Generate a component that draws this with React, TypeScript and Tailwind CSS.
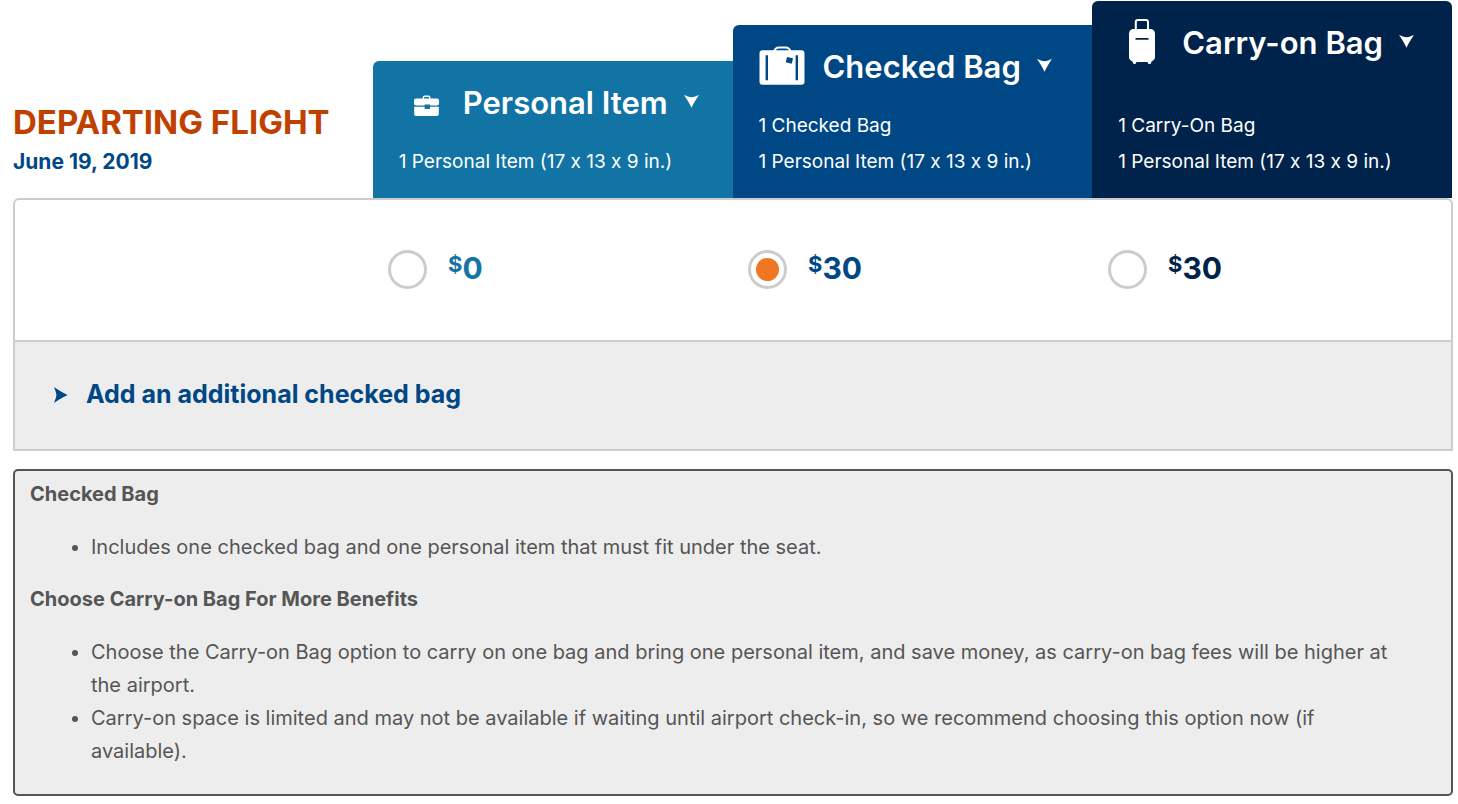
import { useState } from "react";
import type { ReactNode } from "react";

function BriefcaseIcon() {
  return (
    <svg viewBox="0 0 48 48" className="size-12 shrink-0" fill="currentColor" aria-hidden="true">
      <path d="M24.3 20v-1.200a1.500 1.500 0 0 1 1.500-1.500h3.600a1.500 1.500 0 0 1 1.500 1.500V20" fill="none" stroke="currentColor" strokeWidth="1.4" />
      <path d="M17 19.400h21a2 2 0 0 1 2 2v3a2 2 0 0 1-2 2h-7v-.8h-5.400v.8H17a2 2 0 0 1-2-2v-3a2 2 0 0 1 2-2z" />
      <path d="M15.200 27.800h10.400V30H31v-2.200h8.800V35a2 2 0 0 1-2 2H17.200a2 2 0 0 1-2-2z" />
    </svg>
  );
}

function SuitcaseIcon() {
  return (
    <svg viewBox="0 0 48 48" className="size-12 shrink-0" fill="currentColor" aria-hidden="true">
      <path d="M15.200 8.200c.8-2.600 2.400-3.800 4.600-3.800h7c2.200 0 3.800 1.200 4.600 3.800" fill="none" stroke="currentColor" strokeWidth="2" />
      <path
        fillRule="evenodd"
        d="M3.500 7.300h39a3 3 0 0 1 3 3v28.400a3 3 0 0 1-3 3h-39a3 3 0 0 1-3-3V10.300a3 3 0 0 1 3-3zM6.600 12.300v25h2.400v-25zM36.600 12.300v25h2.400v-25zM28 14l6 1.300-1.300 5.400-6-1.400z"
      />
    </svg>
  );
}

function RollerBagIcon() {
  return (
    <svg viewBox="0 0 48 48" className="size-12 shrink-0" fill="currentColor" aria-hidden="true">
      <path d="M17.800 11V3a2 2 0 0 1 2-2h8.200a2 2 0 0 1 2 2v8" fill="none" stroke="currentColor" strokeWidth="2" />
      <path
        fillRule="evenodd"
        d="M15.500 10h17a4.500 4.500 0 0 1 4.500 4.500V38c0 2-1.200 3.400-3.200 4.200L32.500 45h-2l-1-2h-11l-1 2h-2l-1.300-2.800C12.200 41.400 11 40 11 38V14.500a4.500 4.500 0 0 1 4.500-4.500zM17.500 19v1.800h13V19z"
      />
    </svg>
  );
}

function Arrow({ className }: { className: string }) {
  return (
    <svg viewBox="0 0 15 15" className={className} fill="currentColor" aria-hidden="true">
      <path d="M0 0C3 1 5 2.200 7.500 2.200S12 1 15 0C12.500 3.500 10 7.500 7.500 12.800C5 7.500 2.500 3.500 0 0z" />
    </svg>
  );
}

type Option = {
  id: string;
  title: string;
  items: string[];
  price: number;
  icon: ReactNode;
  tab: string;
  list: string;
  priceColor: string;
};

const options: Option[] = [
  {
    id: "personal",
    title: "Personal Item",
    items: ["1 Personal Item (17 x 13 x 9 in.)"],
    price: 0,
    icon: <BriefcaseIcon />,
    tab: "rounded-tl-md bg-[#1273a5]",
    list: "",
    priceColor: "text-[#1273a5]",
  },
  {
    id: "checked",
    title: "Checked Bag",
    items: ["1 Checked Bag", "1 Personal Item (17 x 13 x 9 in.)"],
    price: 30,
    icon: <SuitcaseIcon />,
    tab: "rounded-tl-md bg-[#004785]",
    list: "",
    priceColor: "text-[#004785]",
  },
  {
    id: "carry-on",
    title: "Carry-on Bag",
    items: ["1 Carry-On Bag", "1 Personal Item (17 x 13 x 9 in.)"],
    price: 30,
    icon: <RollerBagIcon />,
    tab: "rounded-t-md bg-[#00234b]",
    list: "mt-6",
    priceColor: "text-[#00234b]",
  },
];

export default function App() {
  const [selected, setSelected] = useState("checked");

  return (
    <main className="bg-white pt-px pr-[5px] pb-2 pl-[13px] font-['Inter','Liberation_Sans',sans-serif] [font-variant-ligatures:no-contextual]">
      <header className="grid grid-cols-4 items-end pr-px">
        <div className="pb-[18px]">
          <h1 className="text-[33px] leading-[44px] font-bold whitespace-nowrap text-[#c04000]">DEPARTING FLIGHT</h1>
          <p className="text-[21px] leading-9 font-bold text-[#004785]">June 19, 2019</p>
        </div>
        {options.map((o) => (
          <section key={o.id} className={`pb-[18px] pl-[26px] text-white ${o.tab}`}>
            <button type="button" className="flex h-[83px] items-center gap-4 whitespace-nowrap">
              {o.icon}
              <span className="text-[31px] leading-9 font-semibold">{o.title}</span>
              <Arrow className="size-[15px] shrink-0" />
            </button>
            <ul className={o.list}>
              {o.items.map((item) => (
                <li key={item} className="text-[19px] leading-9 whitespace-nowrap">
                  {item}
                </li>
              ))}
            </ul>
          </section>
        ))}
      </header>

      <section className="rounded-t-md border-2 border-[#ccc]">
        <div className="grid grid-cols-[358fr_360fr_360fr_358fr] pt-[49px] pb-[51px]">
          <div />
          {options.map((o) => (
            <label key={o.id} className={`flex h-10 items-center gap-[21px] pl-[15px] font-bold ${o.priceColor}`}>
              <input
                type="radio"
                name="bag"
                value={o.id}
                checked={selected === o.id}
                onChange={() => setSelected(o.id)}
                className="size-[39px] shrink-0 appearance-none rounded-full border-[3px] border-[#ccc] bg-clip-content p-[5px] checked:bg-[#f07623]"
              />
              <span className="flex items-start pb-0.5">
                <span className="text-[22px] leading-7">$</span>
                <span className="text-[30px] leading-9">{o.price}</span>
              </span>
            </label>
          ))}
        </div>
        <div className="border-t-2 border-[#ccc] bg-[#ededed] px-[39px] pt-[35px] pb-[37px]">
          <button type="button" className="flex items-center gap-4 text-[#004785]">
            <Arrow className="size-4 shrink-0 -rotate-90" />
            <span className="text-[25px] leading-[35px] font-bold">Add an additional checked bag</span>
          </button>
        </div>
      </section>

      <section className="mt-[18px] rounded-[5px] border-2 border-[#555] bg-[#ededed] px-[15px] pt-[7px] pb-[26px] text-[20px] leading-[33px] text-[#555]">
        <h2 className="font-bold">Checked Bag</h2>
        <ul className="mt-5 mb-[19px] list-disc pr-8 pl-[61px]">
          <li>Includes one checked bag and one personal item that must fit under the seat.</li>
        </ul>
        <h2 className="font-bold">Choose Carry-on Bag For More Benefits</h2>
        <ul className="mt-5 list-disc pr-8 pl-[61px]">
          <li>
            Choose the Carry-on Bag option to carry on one bag and bring one personal item, and save money, as carry-on
            bag fees will be higher at the airport.
          </li>
          <li>
            Carry-on space is limited and may not be available if waiting until airport check-in, so we recommend
            choosing this option now (if available).
          </li>
        </ul>
      </section>
    </main>
  );
}
